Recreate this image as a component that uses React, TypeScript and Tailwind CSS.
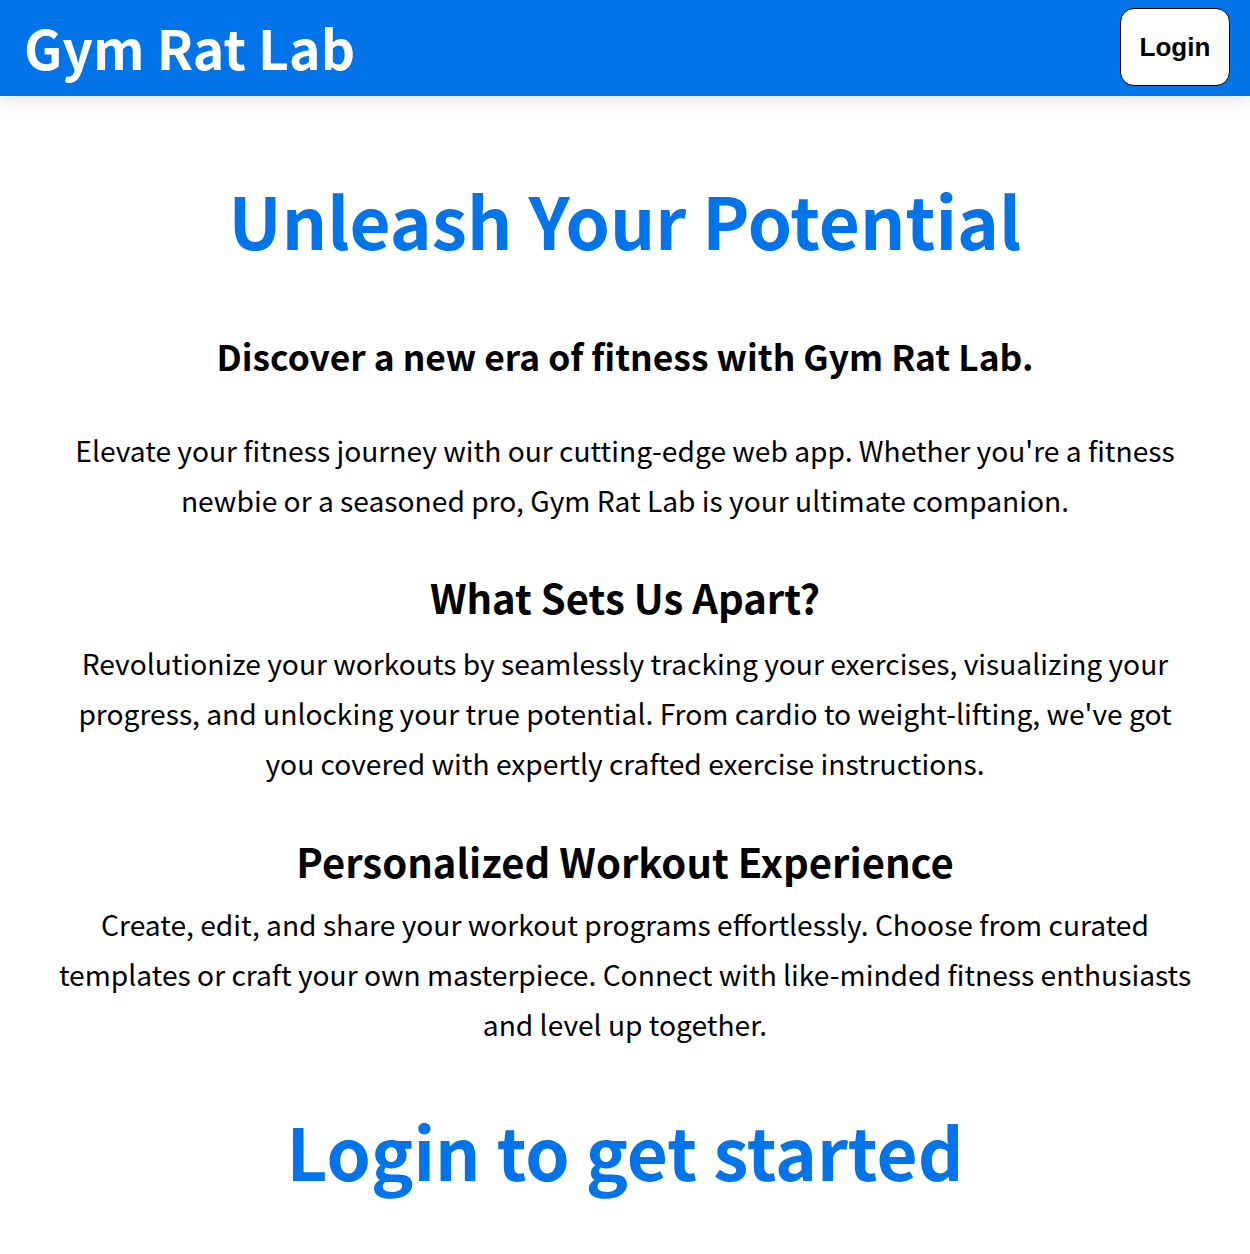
export default function App() {
  const f = { fontFamily: '"Noto Sans CJK JP", "Noto Sans", sans-serif' };
  return (
    <div className="min-h-[1254px] bg-white text-black" style={f}>
      <header className="h-[96px] bg-[#0074e8] flex items-center justify-between pl-[24px] pr-[20px] shadow-[0_4px_18px_rgba(0,0,0,0.12)] relative">
        <div className="text-white text-[53.5px] font-bold leading-none -mt-[3px]">Gym Rat Lab</div>
        <button
          className="w-[110px] h-[78px] -mt-[2px] bg-white border border-black rounded-[14px] text-[26px] font-bold text-black"
          style={{ fontFamily: '"Liberation Sans", Arial, sans-serif' }}
        >
          Login
        </button>
      </header>
      <main className="flex flex-col items-center text-center px-[55px]">
        <h1 className="mt-[73px] text-[#0074e8] text-[71px] font-bold leading-[100px]">Unleash Your Potential</h1>
        <h2 className="mt-[59px] text-[35.4px] font-bold leading-[56px]">Discover a new era of fitness with Gym Rat Lab.</h2>
        <p className="mt-[41px] text-[28.2px] leading-[50px]">
          Elevate your fitness journey with our cutting-edge web app. Whether you're a fitness newbie or a seasoned pro, Gym Rat Lab is your ultimate companion.
        </p>
        <h3 className="mt-[40px] text-[40px] font-bold leading-[64px]">What Sets Us Apart?</h3>
        <p className="mt-[9px] text-[28.2px] leading-[50px]">
          Revolutionize your workouts by seamlessly tracking your exercises, visualizing your progress, and unlocking your true potential. From cardio to weight-lifting, we've got you covered with expertly crafted exercise instructions.
        </p>
        <h3 className="mt-[41px] text-[40px] font-bold leading-[64px]">Personalized Workout Experience</h3>
        <p className="mt-[6px] text-[28.2px] leading-[50px]">
          Create, edit, and share your workout programs effortlessly. Choose from curated templates or craft your own masterpiece. Connect with like-minded fitness enthusiasts and level up together.
        </p>
        <h1 className="mt-[51px] text-[#0074e8] text-[71px] font-bold leading-[100px]">Login to get started</h1>
      </main>
    </div>
  );
}
